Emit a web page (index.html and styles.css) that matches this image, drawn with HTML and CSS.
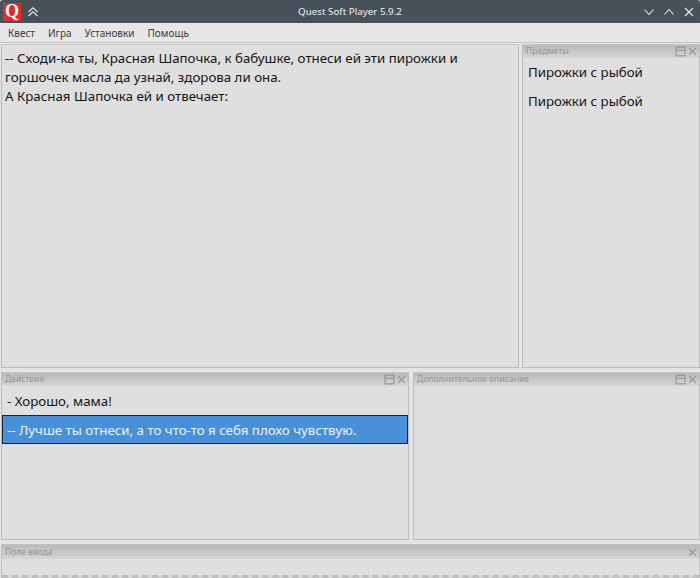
FILE: index.html
```html
<!DOCTYPE html>
<html lang="ru">
<head>
<meta charset="utf-8">
<title>Quest Soft Player</title>
<link rel="stylesheet" href="styles.css">
</head>
<body>
<div class="window">
  <header class="titlebar">
    <div class="tb-left">
      <span class="logo">Q</span>
      <svg class="tb-icon" viewBox="0 0 12 12"><path d="M1.500 6 6 1.800 10.500 6M1.500 10 6 5.800 10.500 10"/></svg>
    </div>
    <div class="tb-title">Quest Soft Player 5.9.2</div>
    <div class="tb-right">
      <svg class="tb-icon" viewBox="0 0 12 12"><path d="M1.500 3.500 6 8.500 10.500 3.500"/></svg>
      <svg class="tb-icon" viewBox="0 0 12 12"><path d="M1.500 8.500 6 3.500 10.500 8.500"/></svg>
      <svg class="tb-icon" viewBox="0 0 12 12"><path d="M2 2 10 10M10 2 2 10"/></svg>
    </div>
  </header>
  <nav class="menubar">
    <span class="menu-item">Квест</span>
    <span class="menu-item">Игра</span>
    <span class="menu-item">Установки</span>
    <span class="menu-item">Помощь</span>
  </nav>
  <main class="workspace">
    <div class="row row-top">
      <section class="pane pane-main">
        <p class="story">-- Сходи-ка ты, Красная Шапочка, к бабушке, отнеси ей эти пирожки и горшочек масла да узнай, здорова ли она.<br>А Красная Шапочка ей и отвечает:</p>
      </section>
      <section class="pane pane-items">
        <div class="dock-title">
          <span class="dock-name">Предметы</span>
          <svg class="dock-btn" viewBox="0 0 10 10"><path d="M1 1H9V9H1ZM1 4H9"/></svg>
          <svg class="dock-btn" viewBox="0 0 10 10"><path d="M2 2 8 8M8 2 2 8"/></svg>
        </div>
        <div class="items">
          <div class="item">Пирожки с рыбой</div>
          <div class="item">Пирожки с рыбой</div>
        </div>
      </section>
    </div>
    <div class="row row-bottom">
      <section class="pane pane-actions">
        <div class="dock-title">
          <span class="dock-name">Действия</span>
          <svg class="dock-btn" viewBox="0 0 10 10"><path d="M1 1H9V9H1ZM1 4H9"/></svg>
          <svg class="dock-btn" viewBox="0 0 10 10"><path d="M2 2 8 8M8 2 2 8"/></svg>
        </div>
        <div class="actions">
          <div class="action">- Хорошо, мама!</div>
          <div class="action action-selected">-- Лучше ты отнеси, а то что-то я себя плохо чувствую.</div>
        </div>
      </section>
      <section class="pane pane-desc">
        <div class="dock-title">
          <span class="dock-name">Дополнительное описание</span>
          <svg class="dock-btn" viewBox="0 0 10 10"><path d="M1 1H9V9H1ZM1 4H9"/></svg>
          <svg class="dock-btn" viewBox="0 0 10 10"><path d="M2 2 8 8M8 2 2 8"/></svg>
        </div>
      </section>
    </div>
    <section class="pane-input">
      <div class="dock-title">
        <span class="dock-name">Поле ввода</span>
        <svg class="dock-btn" viewBox="0 0 10 10"><path d="M2 2 8 8M8 2 2 8"/></svg>
      </div>
      <div class="input-body"></div>
    </section>
  </main>
</div>
</body>
</html>
```
FILE: styles.css
```css
* { box-sizing: border-box; }
html, body { margin: 0; padding: 0; }
body {
  width: 700px;
  height: 578px;
  overflow: hidden;
  font-family: "Noto Sans", "Open Sans", sans-serif;
  background: #dfdfdf;
}
.window {
  display: flex;
  flex-direction: column;
  height: 578px;
}
.titlebar {
  height: 23px;
  flex: none;
  display: flex;
  align-items: center;
  justify-content: space-between;
  position: relative;
  background: #47515a;
  color: #eef0f1;
  border-radius: 3px 3px 0 0;
  padding: 0 5px 0 3px;
}
.tb-left { display: flex; align-items: center; gap: 6px; }
.tb-right { display: flex; align-items: center; gap: 8px; }
.logo {
  width: 18px;
  height: 18px;
  background: #e32a2a;
  color: #fff;
  font: bold 18px/17px "Liberation Serif", serif;
  text-align: center;
}
.tb-icon {
  width: 12px;
  height: 12px;
  fill: none;
  stroke: #e6e9ea;
  stroke-width: 1.100;
}
.tb-title {
  position: absolute;
  left: 0;
  right: 0;
  text-align: center;
  font-size: 9.800px;
  line-height: 23px;
}
.menubar {
  height: 19px;
  flex: none;
  display: flex;
  align-items: center;
  gap: 13px;
  padding: 0 8px;
  background: #e6e6e6;
  font-size: 10px;
  color: #3c3c3c;
}
.workspace {
  flex: 1;
  min-height: 0;
  display: flex;
  flex-direction: column;
  padding: 1px 0 0 1px;
  background: #e4e4e4;
  border-top: 1px solid #c4c4c4;
}
.row { display: flex; flex: none; }
.row-top { height: 324px; gap: 3px; }
.row-bottom { height: 168px; gap: 4px; margin-top: 4px; }
.pane {
  background: #dfdfdf;
  border: 1px solid #bcbcbc;
  border-top-color: #c8c8c8;
  min-width: 0;
}
.pane-main { width: 518px; padding: 4px 3px 0 3px; }
.pane-items { flex: 1; }
.pane-actions { width: 408px; }
.pane-desc { flex: 1; }
.story {
  margin: 0;
  font-size: 13.300px;
  line-height: 19px;
  color: #141414;
}
.dock-title {
  height: 13px;
  display: flex;
  align-items: center;
  gap: 1px;
  padding: 0 1px 0 3px;
  background: linear-gradient(#b9b9b9, #d6d6d6);
}
.dock-name {
  flex: 1;
  font-size: 8.500px;
  line-height: 11px;
  padding-bottom: 2px;
  color: #959595;
  white-space: nowrap;
}
.dock-btn {
  width: 11px;
  height: 11px;
  flex: none;
  fill: none;
  stroke: #979797;
  stroke-width: 1.100;
}
.items { padding: 5px 5px 0 5px; }
.item {
  font-size: 13.300px;
  line-height: 19px;
  color: #141414;
  margin-bottom: 10px;
}
.actions { padding-top: 6px; }
.action {
  font-size: 13.300px;
  line-height: 19px;
  color: #141414;
  padding: 0 5px;
  height: 19px;
}
.action-selected {
  margin-top: 4px;
  height: 29px;
  line-height: 28px;
  padding: 0 4px;
  background: #4a90d9;
  color: #e9f2fb;
  border: 1px solid #17283a;
}
.pane-input {
  height: 34px;
  margin: 4px 0 0 0;
  flex: none;
  border: 1px solid #c0c0c0;
  background: #dfdfdf;
}
.pane-input .dock-title { height: 14px; padding-top: 1px; }
.input-body {
  height: 18px;
  border-bottom: 2px dashed #bcbcbc;
}
```
